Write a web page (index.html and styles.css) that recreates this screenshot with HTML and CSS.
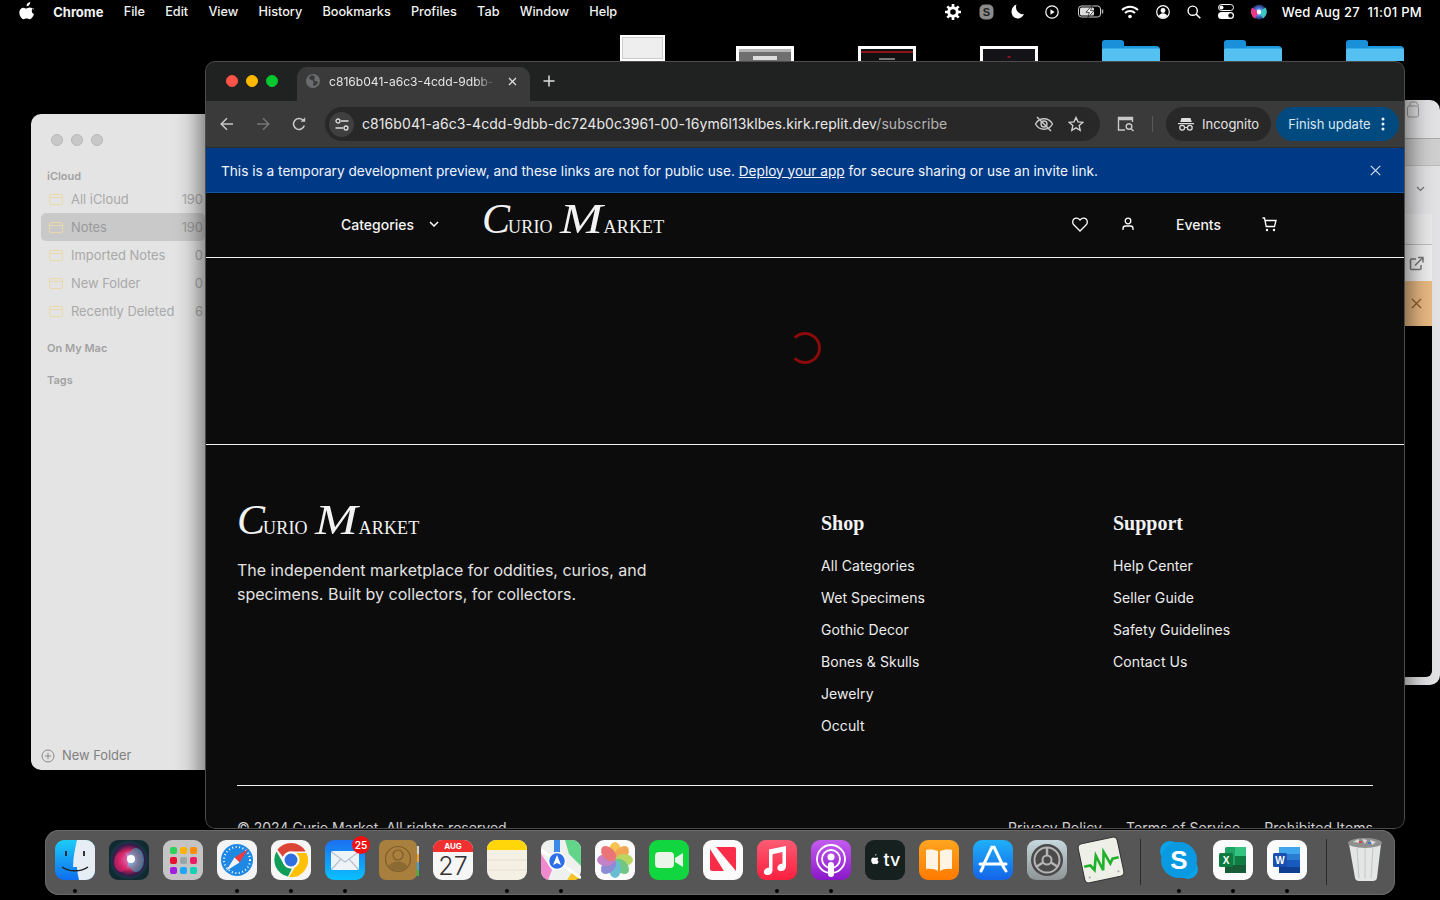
FILE: index.html
```html
<!DOCTYPE html>
<html lang="en">
<head>
  <meta charset="UTF-8">
  <meta name="viewport" content="width=device-width, initial-scale=1.0">
  <title>Curio Market - Subscribe</title>
  <link rel="stylesheet" href="styles.css">
</head>
<body>
<div class="desktop">

  <!-- menu bar -->
  <header class="menubar">
    <nav class="menu-left">
      <svg class="apple" width="16" height="18" viewBox="0 0 16 18"><path fill="#fff" d="M11.2 0c.1 1.2-.3 2.2-1 3-.7.8-1.700 1.300-2.600 1.200-.1-1.100.4-2.200 1-2.900C9.300.6 10.400.1 11.200 0zM14.500 6.100c-1 .6-1.700 1.600-1.700 2.900 0 1.500.9 2.600 2.200 3.100-.3 1-.8 1.900-1.400 2.800-.9 1.200-1.700 2.300-3 2.300s-1.600-.7-3-.7-1.900.7-3 .7c-1.200 0-2.100-1.200-3-2.500C.4 12.900-.1 10.300.8 8.200c.7-1.500 2-2.500 3.500-2.500 1.200 0 2.100.8 3.100.8.900 0 1.800-.9 3.300-.9 1.500.100 2.900.7 3.800 2.500z"/></svg>
      <span class="menu-item app-name">Chrome</span>
      <span class="menu-item">File</span>
      <span class="menu-item">Edit</span>
      <span class="menu-item">View</span>
      <span class="menu-item">History</span>
      <span class="menu-item">Bookmarks</span>
      <span class="menu-item">Profiles</span>
      <span class="menu-item">Tab</span>
      <span class="menu-item">Window</span>
      <span class="menu-item">Help</span>
    </nav>
    <div class="menu-right">
      <svg class="status-gear" width="16" height="16" viewBox="0 0 16 16"><circle cx="8" cy="8" r="4.300" fill="none" stroke="#fff" stroke-width="3"/><path stroke="#fff" stroke-width="2.600" d="M8 0v3M8 13v3M0 8h3M13 8h3M2.300 2.300l2.100 2.100M11.600 11.600l2.100 2.100M2.300 13.700l2.100-2.100M11.600 4.400l2.100-2.100"/></svg>
      <svg width="15" height="16" viewBox="0 0 15 16"><rect x=".5" y=".5" width="14" height="15" rx="5" fill="#8a8a8a"/><text x="7.500" y="12" text-anchor="middle" class="svg-s">S</text></svg>
      <svg class="status-moon" width="14" height="15" viewBox="0 0 14 15"><path fill="#fff" d="M5.500.5C3.800 5 6.500 10 13 10.300 11.700 13 9.300 14.500 7 14.500 3.200 14.500.5 11.400.5 7.800.5 4.300 2.500 1.500 5.500.5z"/></svg>
      <svg class="status-play" width="14" height="14" viewBox="0 0 14 14"><circle cx="7" cy="7" r="6.200" fill="none" stroke="#fff" stroke-width="1.200"/><path fill="#fff" d="M5.500 4.200l4 2.800-4 2.800z"/></svg>
      <svg width="26" height="13" viewBox="0 0 26 13"><rect x=".5" y="1" width="22" height="11" rx="3" fill="none" stroke="#ccc"/><rect x="2" y="2.500" width="14" height="8" rx="1.500" fill="#ddd"/><path fill="#fff" stroke="#000" stroke-width=".7" d="M14 .5L8 7.300h3.400L10 12.500l6-6.800h-3.400z"/><path stroke="#aaa" stroke-width="1.500" d="M24.500 4.500v4"/></svg>
      <svg width="18" height="14" viewBox="0 0 18 14"><path fill="none" stroke="#fff" stroke-width="2" d="M1 5c4.500-4.300 11.500-4.300 16 0M4 8c2.800-2.600 7.200-2.600 10 0"/><circle cx="9" cy="11.500" r="1.800" fill="#fff"/></svg>
      <svg width="14" height="14" viewBox="0 0 14 14"><circle cx="7" cy="7" r="6.300" fill="none" stroke="#fff" stroke-width="1.200"/><circle cx="7" cy="5.500" r="2.400" fill="#fff"/><path fill="#fff" d="M2.800 11c.8-2 2.300-2.800 4.200-2.800s3.400.8 4.200 2.800C10 12.300 8.500 13 7 13s-3-.7-4.200-2z"/></svg>
      <svg width="14" height="14" viewBox="0 0 14 14"><circle cx="5.700" cy="5.700" r="4.600" fill="none" stroke="#fff" stroke-width="1.400"/><path stroke="#fff" stroke-width="1.600" d="M9 9l4.300 4.300"/></svg>
      <svg width="16" height="15" viewBox="0 0 16 15"><rect x=".5" y=".5" width="15" height="6" rx="3" fill="none" stroke="#fff"/><circle cx="3.500" cy="3.500" r="2" fill="#fff"/><rect y="8" width="16" height="7" rx="3.500" fill="#fff"/><circle cx="12.500" cy="11.500" r="2.200" fill="#000"/></svg>
      <svg width="16" height="16" viewBox="0 0 16 16"><defs><radialGradient id="siri-menu"><stop offset="0" stop-color="#fff"/><stop offset=".5" stop-color="#4a7ee8"/><stop offset="1" stop-color="#222a55"/></radialGradient></defs><circle cx="8" cy="8" r="7.500" fill="url(#siri-menu)"/><path fill="#e83a8c" d="M8 8L1 3.500A8 8 0 0 0 4 14.500z"/><path fill="#3bc7c4" d="M8 8l6.500-4.500A8 8 0 0 1 12 14.500z"/><circle cx="8" cy="8" r="2.200" fill="#fff"/></svg>
      <span class="menu-clock">Wed Aug 27&nbsp; 11:01 PM</span>
    </div>
  </header>

  <!-- desktop icons peeking out behind the browser -->
  <div class="desk-icon shot shot-blank"></div>
  <div class="desk-icon shot shot-grey"></div>
  <div class="desk-icon shot shot-red"></div>
  <div class="desk-icon shot shot-dark"></div>
  <div class="desk-icon folder folder-1"></div>
  <div class="desk-icon folder folder-2"></div>
  <div class="desk-icon folder folder-3"></div>

  <!-- notes window -->
  <aside class="notes-window">
    <div class="lights">
      <span class="light"></span><span class="light"></span><span class="light"></span>
    </div>
    <h4 class="notes-head">iCloud</h4>
    <ul class="notes-list">
      <li class="notes-row"><span class="folder-mini"></span><span class="notes-name">All iCloud</span><span>190</span></li>
      <li class="notes-row selected"><span class="folder-mini"></span><span class="notes-name">Notes</span><span>190</span></li>
      <li class="notes-row"><span class="folder-mini"></span><span class="notes-name">Imported Notes</span><span>0</span></li>
      <li class="notes-row"><span class="folder-mini"></span><span class="notes-name">New Folder</span><span>0</span></li>
      <li class="notes-row"><span class="folder-mini"></span><span class="notes-name">Recently Deleted</span><span>6</span></li>
    </ul>
    <h4 class="notes-head on-mac">On My Mac</h4>
    <h4 class="notes-head tags">Tags</h4>
    <div class="new-folder">
      <svg width="14" height="14" viewBox="0 0 14 14"><circle cx="7" cy="7" r="6" fill="none" stroke="#888"/><path stroke="#888" d="M7 3.800v6.400M3.800 7h6.400"/></svg>
      New Folder
    </div>
  </aside>

  <!-- window on the right, mostly hidden -->
  <aside class="side-window">
    <div class="side-top">
      <svg width="16" height="18" viewBox="0 0 16 18"><rect x=".5" y="5" width="11" height="11" rx="2" fill="none" stroke="#999"/><path fill="none" stroke="#999" d="M3 5V2.500A1.500 1.500 0 0 1 4.500 1H9l3 4"/></svg>
    </div>
    <div class="side-bar"></div>
    <div class="side-sort"><svg width="9" height="6" viewBox="0 0 9 6"><path fill="none" stroke="#777" stroke-width="1.200" d="M1 1l3.500 3.500L8 1"/></svg></div>
    <div class="side-row"></div>
    <div class="side-link">
      <svg width="15" height="15" viewBox="0 0 15 15"><path fill="none" stroke="#777" stroke-width="1.500" d="M7 3H2.500A1 1 0 0 0 1.500 4v8.500a1 1 0 0 0 1 1H11a1 1 0 0 0 1-1V9M6 9.500L13.500 2M9 1.500h5v5"/></svg>
    </div>
    <div class="side-close">
      <svg width="11" height="11" viewBox="0 0 11 11"><path stroke="#8a5a2a" stroke-width="1.200" d="M1 1l9 9M10 1l-9 9"/></svg>
    </div>
    <div class="side-black"></div>
  </aside>

  <!-- browser -->
  <main class="browser">
    <div class="tabstrip">
      <div class="lights traffic">
        <span class="light red"></span><span class="light yellow"></span><span class="light green"></span>
      </div>
      <div class="tab">
        <svg width="14" height="14" viewBox="0 0 14 14"><circle cx="7" cy="7" r="7" fill="#6a6d70"/><path fill="#3a3a3a" d="M5 1.500C3 2.500 2.500 4.500 4 5.500s3 .5 3.500 2-1 2.500 0 4.500c2-.3 4-1.800 4.500-4-1-1-2.500-.5-3.500-1.500S9.500 4 8.500 2C7.500 1.300 6 1.200 5 1.500z"/></svg>
        <span class="tab-title">c816b041-a6c3-4cdd-9dbb-</span>
        <svg class="tab-close" width="9" height="9" viewBox="0 0 9 9"><path stroke="#ddd" stroke-width="1.300" d="M1 1l7 7M8 1L1 8"/></svg>
      </div>
      <svg class="tab-new" width="12" height="12" viewBox="0 0 12 12"><path stroke="#ddd" stroke-width="1.500" d="M6 .5v11M.5 6h11"/></svg>
    </div>

    <div class="toolbar">
      <svg class="tool-icon" width="14" height="14" viewBox="0 0 14 14"><path fill="none" stroke="#c8c8c8" stroke-width="1.500" d="M13 7H1.500M7 1.200L1.200 7 7 12.800"/></svg>
      <svg class="tool-icon" width="14" height="14" viewBox="0 0 14 14"><path fill="none" stroke="#757575" stroke-width="1.500" d="M1 7h11.500M7 1.200L12.800 7 7 12.800"/></svg>
      <svg class="tool-icon" width="14" height="14" viewBox="0 0 14 14"><path fill="none" stroke="#c8c8c8" stroke-width="1.500" d="M12.300 8.500A5.500 5.500 0 1 1 11 3.200"/><path fill="#c8c8c8" d="M8.500 4.800h4.700V.2z"/></svg>
      <div class="omnibox">
        <span class="site-info">
          <svg width="14" height="13" viewBox="0 0 14 13"><path fill="none" stroke="#ddd" stroke-width="1.300" d="M6 3h7.500M.5 10H8"/><circle cx="3" cy="3" r="2" fill="none" stroke="#ddd" stroke-width="1.300"/><circle cx="11" cy="10" r="2" fill="none" stroke="#ddd" stroke-width="1.300"/></svg>
        </span>
        <span class="url">c816b041-a6c3-4cdd-9dbb-dc724b0c3961-00-16ym6l13klbes.kirk.replit.dev<span class="url-path">/subscribe</span></span>
        <svg width="20" height="16" viewBox="0 0 20 16"><path fill="none" stroke="#c8c8c8" stroke-width="1.400" d="M1.500 8C3.500 4.500 6.500 2.800 10 2.800S16.500 4.500 18.500 8c-2 3.500-5 5.200-8.500 5.200S3.500 11.500 1.500 8z"/><circle cx="10" cy="8" r="3" fill="none" stroke="#c8c8c8" stroke-width="1.400"/><path stroke="#c8c8c8" stroke-width="1.500" d="M3 1l14 14"/></svg>
        <svg class="star" width="16" height="16" viewBox="0 0 16 16"><path fill="none" stroke="#d0d0d0" stroke-width="1.400" d="M8 1.500l2 4.400 4.800.5-3.600 3.200 1 4.700L8 11.900l-4.200 2.400 1-4.700L1.200 6.400 6 5.900z"/></svg>
      </div>
      <svg class="reader" width="18" height="16" viewBox="0 0 18 16"><path fill="none" stroke="#c8c8c8" stroke-width="1.400" d="M8 14H1.500V1.500h14V6"/><path stroke="#c8c8c8" stroke-width="2.500" d="M1.500 3h14"/><circle cx="12" cy="10.500" r="2.800" fill="none" stroke="#c8c8c8" stroke-width="1.400"/><path stroke="#c8c8c8" stroke-width="1.500" d="M14 12.500l2.500 2.500"/></svg>
      <span class="tool-sep"></span>
      <div class="incognito">
        <svg width="16" height="14" viewBox="0 0 16 14"><path fill="#ddd" d="M3.500 1h9l1.300 4H2.200zM0 6h16v1.300H0z"/><circle cx="4.200" cy="10.800" r="2.400" fill="none" stroke="#ddd" stroke-width="1.300"/><circle cx="11.800" cy="10.800" r="2.400" fill="none" stroke="#ddd" stroke-width="1.300"/><path stroke="#ddd" stroke-width="1.200" d="M6.600 10.500h2.800"/></svg>
        Incognito
      </div>
      <div class="finish-update">
        Finish update
        <svg width="4" height="14" viewBox="0 0 4 14"><circle cx="2" cy="2" r="1.500" fill="#e8f0fa"/><circle cx="2" cy="7" r="1.500" fill="#e8f0fa"/><circle cx="2" cy="12" r="1.500" fill="#e8f0fa"/></svg>
      </div>
    </div>

    <div class="dev-banner">
      <p>This is a temporary development preview, and these links are not for public use. <a href="#">Deploy your app</a> for secure sharing or use an invite link.</p>
      <svg width="11" height="11" viewBox="0 0 11 11"><path stroke="#d5def0" stroke-width="1.200" d="M.8.8l9.400 9.400M10.200.8L.8 10.200"/></svg>
    </div>

    <div class="page">
      <div class="site-nav">
        <div class="nav-left">
          <button class="categories">
            Categories
            <svg width="10" height="6" viewBox="0 0 10 6"><path fill="none" stroke="#fff" stroke-width="1.500" d="M1 1l4 4 4-4"/></svg>
          </button>
          <a class="logo" href="#"><span class="logo-c">C</span>URIO <span class="logo-m">M</span>ARKET</a>
        </div>
        <div class="nav-right">
          <svg width="16" height="15" viewBox="0 0 16 15"><path fill="none" stroke="#fff" stroke-width="1.300" d="M8 14L2 8C.2 6.200.3 3.500 1.900 2c1.600-1.400 4.300-1.300 6.100 1 1.800-2.300 4.500-2.400 6.100-1 1.600 1.500 1.700 4.200-.1 6z"/></svg>
          <svg class="icon-user" width="12" height="14" viewBox="0 0 12 14"><circle cx="6" cy="4" r="2.800" fill="none" stroke="#fff" stroke-width="1.300"/><path fill="none" stroke="#fff" stroke-width="1.300" d="M1 13v-1.500C1 10 2.300 9 3.500 9h5c1.200 0 2.500 1 2.500 2.500V13"/></svg>
          <span class="nav-events">Events</span>
          <svg class="icon-cart" width="15" height="15" viewBox="0 0 15 15"><path fill="none" stroke="#fff" stroke-width="1.300" d="M.5 1h2l1.700 8.500h8.300L14 3.500H3.200"/><circle cx="5" cy="13" r="1.200" fill="#fff"/><circle cx="12" cy="13" r="1.200" fill="#fff"/></svg>
        </div>
      </div>

      <div class="loading">
        <div class="spinner"></div>
      </div>

      <footer class="site-footer">
        <div class="footer-grid">
          <div class="footer-brand">
            <a class="logo" href="#"><span class="logo-c">C</span>URIO <span class="logo-m">M</span>ARKET</a>
            <p>The independent marketplace for oddities, curios, and specimens. Built by collectors, for collectors.</p>
          </div>
          <div class="footer-col">
            <h3>Shop</h3>
            <a href="#">All Categories</a>
            <a href="#">Wet Specimens</a>
            <a href="#">Gothic Decor</a>
            <a href="#">Bones &amp; Skulls</a>
            <a href="#">Jewelry</a>
            <a href="#">Occult</a>
          </div>
          <div class="footer-col">
            <h3>Support</h3>
            <a href="#">Help Center</a>
            <a href="#">Seller Guide</a>
            <a href="#">Safety Guidelines</a>
            <a href="#">Contact Us</a>
          </div>
        </div>
        <div class="footer-bottom">
          <span>© 2024 Curio Market. All rights reserved.</span>
          <div class="legal">
            <a href="#">Privacy Policy</a>
            <a href="#">Terms of Service</a>
            <a href="#">Prohibited Items</a>
          </div>
        </div>
      </footer>
    </div>
  </main>

  <!-- dock -->
  <footer class="dock">
    <div class="dock-item running">
      <svg viewBox="0 0 40 40"><defs><linearGradient id="finder-a" x1="0" y1="0" x2="0" y2="1"><stop offset="0" stop-color="#1ccbf7"/><stop offset="1" stop-color="#0f6ff0"/></linearGradient></defs><rect width="40" height="40" rx="9" fill="url(#finder-a)"/><path fill="#e6edf5" d="M22 0h9a9 9 0 0 1 9 9v22a9 9 0 0 1-9 9h-7c-1-5-2-9-2-13h-4c0-9 2-18 4-27z"/><path stroke="#222" stroke-width="1.800" d="M11 11v5M29 11v5"/><path fill="none" stroke="#222" stroke-width="1.500" d="M7 27c7 5 19 5 26 0"/></svg>
    </div>
    <div class="dock-item">
      <svg viewBox="0 0 40 40"><defs><radialGradient id="siri-a"><stop offset="0" stop-color="#fff"/><stop offset=".2" stop-color="#c9a0e8"/><stop offset=".5" stop-color="#d0245f"/><stop offset=".8" stop-color="#3a1a4a"/><stop offset="1" stop-color="#0c3a44"/></radialGradient></defs><rect width="40" height="40" rx="9" fill="#102a30"/><circle cx="20" cy="20" r="19" fill="url(#siri-a)"/><ellipse cx="27" cy="20" rx="8" ry="12" fill="#3fb6c6" opacity=".55"/><ellipse cx="12" cy="22" rx="7" ry="10" fill="#e0246a" opacity=".6"/><circle cx="22" cy="19" r="4" fill="#fff"/></svg>
    </div>
    <div class="dock-item">
      <svg viewBox="0 0 40 40"><rect width="40" height="40" rx="9" fill="#c4c4c4"/><rect x="7" y="7" width="7" height="7" rx="2" fill="#30d158"/><rect x="17" y="7" width="7" height="7" rx="2" fill="#ffb300"/><rect x="27" y="7" width="7" height="7" rx="2" fill="#fb8c00"/><rect x="7" y="17" width="7" height="7" rx="2" fill="#e8112d"/><rect x="17" y="17" width="7" height="7" rx="2" fill="#9aa5a8"/><rect x="27" y="17" width="7" height="7" rx="2" fill="#ec1c64"/><rect x="7" y="27" width="7" height="7" rx="2" fill="#a11ee0"/><rect x="17" y="27" width="7" height="7" rx="2" fill="#1ea7fd"/><rect x="27" y="27" width="7" height="7" rx="2" fill="#12d1b4"/></svg>
    </div>
    <div class="dock-item running">
      <svg viewBox="0 0 40 40"><rect width="40" height="40" rx="9" fill="#f4f4f4"/><circle cx="20" cy="20" r="16" fill="#1e88e5"/><circle cx="20" cy="20" r="13" fill="none" stroke="#fff" stroke-width="2" stroke-dasharray="1 2.500"/><path fill="#ef3b3b" d="M31 9L17.500 17.500l5 5z"/><path fill="#f5f5f5" d="M9 31l8.500-13.500 5 5z"/></svg>
    </div>
    <div class="dock-item running">
      <svg viewBox="0 0 40 40"><rect width="40" height="40" rx="9" fill="#f6f6f6"/><path fill="#db4437" d="M20 3a17 17 0 0 1 14.700 8.500H20a8.500 8.500 0 0 0-8 5.500L6.400 9.800A17 17 0 0 1 20 3z"/><path fill="#0f9d58" d="M5.500 11.500L13 24.500a8.500 8.500 0 0 0 8 4l-4 8A17 17 0 0 1 5.500 11.500z"/><path fill="#ffc107" d="M35.500 13a17 17 0 0 1-17.500 24l7.500-12.500a8.500 8.500 0 0 0 0-11.500z"/><circle cx="20" cy="20" r="8.500" fill="#fff"/><circle cx="20" cy="20" r="6.500" fill="#2f6fe0"/></svg>
    </div>
    <div class="dock-item running">
      <svg viewBox="0 0 40 40"><defs><linearGradient id="mail-a" x1="0" y1="0" x2="0" y2="1"><stop offset="0" stop-color="#1c6ff0"/><stop offset="1" stop-color="#0ac0ff"/></linearGradient></defs><rect width="40" height="40" rx="9" fill="url(#mail-a)"/><rect x="6" y="11" width="28" height="19" rx="2" fill="#eef3f8"/><path fill="none" stroke="#b5c2ce" stroke-width="1.200" d="M6.500 12L20 22l13.500-10M6.500 29.500L16 19M33.500 29.500L24 19"/></svg>
      <span class="badge">25</span>
    </div>
    <div class="dock-item">
      <svg viewBox="0 0 40 40"><rect x="36" y="6" width="4" height="8" fill="#d3d3d3"/><rect x="36" y="14" width="4" height="8" fill="#f1a533"/><rect x="36" y="22" width="4" height="8" fill="#3aa6dd"/><rect x="36" y="30" width="4" height="6" fill="#3ab54a"/><rect width="38" height="40" rx="7" fill="#a97f3d"/><circle cx="19" cy="19" r="12.500" fill="none" stroke="#7e5d2a" stroke-width="1.200"/><circle cx="19" cy="15" r="5" fill="none" stroke="#7e5d2a" stroke-width="1.200"/><path fill="#8c6a33" d="M9.500 27c2.500-5 6-5.500 9.500-5.500s7 .5 9.500 5.500c-5 5-14 5-19 0z"/></svg>
    </div>
    <div class="dock-item">
      <svg viewBox="0 0 40 40"><rect width="40" height="40" rx="9" fill="#f6f6f6"/><path fill="#f0312f" d="M0 12V9a9 9 0 0 1 9-9h22a9 9 0 0 1 9 9v3z"/><text x="20" y="9" text-anchor="middle" class="svg-month">AUG</text><text x="20" y="35" text-anchor="middle" class="svg-day">27</text></svg>
    </div>
    <div class="dock-item running">
      <svg viewBox="0 0 40 40"><rect width="40" height="40" rx="9" fill="#f4f0e4"/><path fill="#ffd60a" d="M0 10V9a9 9 0 0 1 9-9h22a9 9 0 0 1 9 9v1z"/><path stroke="#e4dfd0" d="M0 20h40M0 30h40"/></svg>
    </div>
    <div class="dock-item running">
      <svg viewBox="0 0 40 40"><rect width="40" height="40" rx="9" fill="#eef1ee"/><path fill="#63d58a" d="M24 0h7a9 9 0 0 1 9 9v17L28 14z"/><path fill="#f189cf" d="M0 14l11 16-4 10a9 9 0 0 1-7-9z"/><path fill="#f7c327" d="M26 40l6-9 8 5a9 9 0 0 1-9 4z"/><path fill="#3a88e8" d="M13 0h6v14h-6z"/><path stroke="#fff" stroke-width="3" d="M0 10l40 28"/><circle cx="16" cy="21" r="8.500" fill="#2c6fe8" stroke="#fff" stroke-width="1.500"/><path fill="#fff" d="M16 15l4 10-4-2-4 2z"/></svg>
    </div>
    <div class="dock-item">
      <svg viewBox="0 0 40 40"><rect width="40" height="40" rx="9" fill="#fbfbfb"/><g opacity=".75"><ellipse cx="20" cy="11" rx="6" ry="9" fill="#f5b017"/><ellipse cx="20" cy="11" rx="6" ry="9" fill="#f08a1d" transform="rotate(45 20 20)"/><ellipse cx="20" cy="11" rx="6" ry="9" fill="#a6c92f" transform="rotate(90 20 20)"/><ellipse cx="20" cy="11" rx="6" ry="9" fill="#45b55e" transform="rotate(135 20 20)"/><ellipse cx="20" cy="11" rx="6" ry="9" fill="#38a9c9" transform="rotate(180 20 20)"/><ellipse cx="20" cy="11" rx="6" ry="9" fill="#6a66c9" transform="rotate(225 20 20)"/><ellipse cx="20" cy="11" rx="6" ry="9" fill="#b15ab8" transform="rotate(270 20 20)"/><ellipse cx="20" cy="11" rx="6" ry="9" fill="#e5484d" transform="rotate(315 20 20)"/></g></svg>
    </div>
    <div class="dock-item">
      <svg viewBox="0 0 40 40"><rect width="40" height="40" rx="9" fill="#12d63f"/><rect x="6" y="12" width="19" height="16" rx="4" fill="#e8f5e8"/><path fill="#e8f5e8" d="M26 18l8-5v14l-8-5z"/></svg>
    </div>
    <div class="dock-item">
      <svg viewBox="0 0 40 40"><rect width="40" height="40" rx="9" fill="#fbfbfb"/><path fill="#fa2d48" d="M7 9l14 22H9a2 2 0 0 1-2-2zM13 7h18a2 2 0 0 1 2 2v22z"/></svg>
    </div>
    <div class="dock-item running">
      <svg viewBox="0 0 40 40"><defs><linearGradient id="music-a" x1="0" y1="0" x2="0" y2="1"><stop offset="0" stop-color="#fb5c74"/><stop offset="1" stop-color="#fa1f3e"/></linearGradient></defs><rect width="40" height="40" rx="9" fill="url(#music-a)"/><path fill="#fff" d="M29 6v20c0 3-2 5-5 5s-4-2-3.500-4 2-3 5-3.500V12l-10 2.200V30c0 3-2 5-5 5s-4-2-3.500-4 2-3 5-3.500V9.500z"/></svg>
    </div>
    <div class="dock-item running">
      <svg viewBox="0 0 40 40"><defs><linearGradient id="pod-a" x1="0" y1="0" x2="0" y2="1"><stop offset="0" stop-color="#c45cf0"/><stop offset="1" stop-color="#8a18c8"/></linearGradient></defs><rect width="40" height="40" rx="9" fill="url(#pod-a)"/><circle cx="20" cy="19" r="14" fill="none" stroke="#fff" stroke-width="1.800"/><circle cx="20" cy="19" r="9" fill="none" stroke="#fff" stroke-width="1.800"/><circle cx="20" cy="17" r="3.500" fill="#fff"/><rect x="17" y="22" width="6" height="15" rx="3" fill="#fff"/></svg>
    </div>
    <div class="dock-item">
      <svg viewBox="0 0 40 40"><rect width="40" height="40" rx="9" fill="#16211f"/><text x="27" y="26" text-anchor="middle" class="svg-tv">tv</text><path fill="#fff" d="M11.500 14c0 .9-.6 1.600-1.400 1.600 0-.9.600-1.500 1.400-1.600zM13.500 18c-.7.400-1 1-1 1.700 0 .9.500 1.500 1.200 1.800-.4 1.200-1.300 2.700-2.200 2.700-.6 0-.8-.4-1.500-.4s-1 .4-1.500.4c-1 0-2.300-2-2.300-3.900 0-1.800 1.100-2.800 2.200-2.800.7 0 1.200.4 1.600.4s1-.5 1.800-.5c.8 0 1.400.3 1.700.6z"/></svg>
    </div>
    <div class="dock-item">
      <svg viewBox="0 0 40 40"><defs><linearGradient id="books-a" x1="0" y1="0" x2="0" y2="1"><stop offset="0" stop-color="#ffa51f"/><stop offset="1" stop-color="#ff7a00"/></linearGradient></defs><rect width="40" height="40" rx="9" fill="url(#books-a)"/><path fill="#fff3e4" d="M19 11v20c-3-2-7-2.500-12-2V10c5-1 9 0 12 1zM21 11v20c3-2 7-2.500 12-2V10c-5-1-9 0-12 1z"/></svg>
    </div>
    <div class="dock-item">
      <svg viewBox="0 0 40 40"><defs><linearGradient id="store-a" x1="0" y1="0" x2="0" y2="1"><stop offset="0" stop-color="#1fb0f8"/><stop offset="1" stop-color="#1464e8"/></linearGradient></defs><rect width="40" height="40" rx="9" fill="url(#store-a)"/><path fill="none" stroke="#fff" stroke-width="3" stroke-linecap="round" d="M21 7l10 21M19 7L10 26M7 24h26M8 31l2-4M31 28l2 3"/></svg>
    </div>
    <div class="dock-item">
      <svg viewBox="0 0 40 40"><defs><linearGradient id="pref-a" x1="0" y1="0" x2="0" y2="1"><stop offset="0" stop-color="#c6d8de"/><stop offset="1" stop-color="#8f9496"/></linearGradient></defs><rect width="40" height="40" rx="9" fill="url(#pref-a)"/><circle cx="20" cy="20" r="16" fill="#4a4a4a"/><circle cx="20" cy="20" r="12.500" fill="none" stroke="#b5b5b5" stroke-width="2"/><circle cx="20" cy="20" r="4.500" fill="none" stroke="#b5b5b5" stroke-width="2"/><path stroke="#b5b5b5" stroke-width="2.500" d="M20 15.500V7.500M16 22.500L9 27M24 22.500L31 27"/></svg>
    </div>
    <div class="dock-item tilted">
      <svg viewBox="0 0 40 40"><rect x="1" y="1" width="38" height="38" rx="4" fill="#eef0e8" stroke="#333"/><path fill="none" stroke="#1fb12a" stroke-width="2.500" d="M3 23h6l3 5 4-13 4 15 4-17 4 12 3-4h6"/><circle cx="6" cy="34" r="1" fill="#aaa"/><circle cx="34" cy="34" r="1" fill="#aaa"/></svg>
    </div>
    <span class="dock-sep"></span>
    <div class="dock-item running">
      <svg viewBox="0 0 40 40"><circle cx="11" cy="11" r="10" fill="#0aa3e8"/><circle cx="29" cy="29" r="10" fill="#0aa3e8"/><circle cx="20" cy="20" r="18" fill="#0a9ae2"/><text x="20" y="29" text-anchor="middle" class="svg-skype">S</text></svg>
    </div>
    <div class="dock-item running">
      <svg viewBox="0 0 40 40"><rect width="40" height="40" rx="9" fill="#fbfbfb"/><rect x="12" y="7" width="21" height="26" rx="1.500" fill="#21a366"/><rect x="22" y="7" width="11" height="9" fill="#33c481"/><rect x="22" y="16" width="11" height="9" fill="#107c41"/><rect x="12" y="25" width="21" height="8" fill="#185c37"/><rect x="6" y="13" width="14" height="14" rx="1.500" fill="#0f7b41"/><text x="13" y="24" text-anchor="middle" class="svg-office">X</text></svg>
    </div>
    <div class="dock-item running">
      <svg viewBox="0 0 40 40"><rect width="40" height="40" rx="9" fill="#fbfbfb"/><rect x="12" y="7" width="21" height="26" rx="1.500" fill="#2b7cd3"/><rect x="12" y="7" width="21" height="7" fill="#41a5ee"/><rect x="12" y="20" width="21" height="7" fill="#185abd"/><rect x="12" y="27" width="21" height="6" fill="#103f91"/><rect x="6" y="13" width="14" height="14" rx="1.500" fill="#1a4fb0"/><text x="13" y="24" text-anchor="middle" class="svg-office">W</text></svg>
    </div>
    <span class="dock-sep"></span>
    <div class="dock-item">
      <svg class="trash" viewBox="0 0 40 46"><path fill="#e4e6e6" d="M4 8h32l-4 34c-.3 2-2 3-4 3H14c-2 0-3.700-1-4-3z"/><path stroke="#c4c6c6" d="M12 12l2 30M20 12v30M28 12l-2 30"/><ellipse cx="20" cy="7" rx="17" ry="5" fill="#8f8f8f"/><path fill="#d9d9d9" d="M8 6l5-3 3 4zM17 3l5 1-2 4zM25 4l6 2-4 3z"/><path fill="#c44" d="M14 5h3v2h-3z"/><path fill="#47b" d="M23 6h3v2h-3z"/></svg>
    </div>
  </footer>
</div>
</body>
</html>
```

FILE: styles.css
```css
* {
  box-sizing: border-box;
}

html, body {
  margin: 0;
  height: 100%;
  background: #000;
}

a {
  color: inherit;
  text-decoration: none;
}

p, h3, h4, ul {
  margin: 0;
  padding: 0;
}

ul {
  list-style: none;
}

.desktop {
  position: relative;
  width: 1440px;
  height: 900px;
  overflow: hidden;
  background: #000;
  font-family: Inter, "Liberation Sans", sans-serif;
  color: #fff;
}

/* menu bar */
.menubar {
  display: flex;
  justify-content: space-between;
  align-items: center;
  height: 23px;
  padding: 0 18px 0 19px;
  font-size: 13px;
  font-weight: 500;
}

.menu-left {
  display: flex;
  align-items: center;
  gap: 20.2px;
}

.apple {
  margin-right: -2px;
  margin-top: -2px;
}

.menu-item {
  font-size: 12.7px;
  white-space: nowrap;
  color: #f2f2f2;
}

.menu-item.app-name {
  font-size: 13px;
  font-weight: 700;
}

.menu-right {
  display: flex;
  align-items: center;
  gap: 17px;
}

.status-gear {
  margin-right: 1px;
}

.status-moon {
  margin-right: 3px;
}

.status-play {
  margin-right: 2px;
}

.menu-clock {
  margin-left: -2px;
  letter-spacing: 0.28px;
  white-space: nowrap;
}

.svg-s {
  font: 700 11px "Liberation Sans", sans-serif;
  fill: #222;
}

/* desktop icons */
.desk-icon {
  position: absolute;
  z-index: 2;
}

.shot {
  top: 46px;
  width: 58px;
  height: 15px;
  border: 3px solid #fff;
  border-bottom: 0;
}

.shot::after {
  content: "";
  position: absolute;
  left: 50%;
  bottom: 1px;
  transform: translateX(-50%);
}

.shot-blank {
  left: 620px;
  top: 35px;
  width: 45px;
  height: 26px;
  border: 2px solid #fff;
  background: #eee;
  outline: 1px solid #ccc;
  outline-offset: -3px;
}

.shot-grey {
  left: 736px;
  background: linear-gradient(#b5b5b5 0 3px, #6f6f6f 3px);
}

.shot-grey::after {
  width: 24px;
  height: 4px;
  background: #ddd;
}

.shot-red {
  left: 858px;
  background: linear-gradient(#111 0 2px, #8c1418 2px 4px, #111 4px);
}

.shot-red::after {
  width: 16px;
  height: 2px;
  background: #777;
}

.shot-dark {
  left: 980px;
  background: #141418;
}

.shot-dark::after {
  width: 3px;
  height: 2px;
  bottom: 3px;
  background: #8c1418;
}

.folder {
  top: 46px;
  width: 58px;
  height: 15px;
  border-radius: 4px 4px 0 0;
  background: linear-gradient(#1b9ae0 0 2px, #55c0f2 3px);
}

.folder::before {
  content: "";
  position: absolute;
  left: 0;
  top: -6px;
  width: 22px;
  height: 8px;
  border-radius: 3px 3px 0 0;
  background: #1b90da;
}

.folder-1 { left: 1102px; }
.folder-2 { left: 1224px; }
.folder-3 { left: 1346px; }

/* notes window */
.notes-window {
  position: absolute;
  left: 31px;
  top: 114px;
  width: 184px;
  height: 656px;
  padding: 0 10px;
  border-radius: 10px 0 0 10px;
  background: #e4e4e4;
  font-size: 12.9px;
  color: #a9a9a9;
}

.lights {
  display: flex;
  gap: 8px;
}

.notes-window .lights {
  padding: 20px 0 0 10px;
}

.light {
  width: 12px;
  height: 12px;
  border-radius: 50%;
  background: #c8c8c8;
  border: 1px solid #b8b8b8;
}

.notes-head {
  padding-left: 6px;
  font-size: 11px;
  font-weight: 600;
  color: #a2a2a2;
}

.notes-window .lights + .notes-head {
  margin-top: 23px;
}

.notes-list {
  margin-top: 2px;
}

.notes-row {
  display: flex;
  align-items: center;
  height: 28px;
  padding: 0 2px 0 8px;
  border-radius: 5px;
}

.notes-row.selected {
  background: #c9c9c9;
  color: #9a9a9a;
}

.notes-name {
  flex: 1;
  white-space: nowrap;
}

.folder-mini {
  position: relative;
  width: 14px;
  height: 11px;
  margin-right: 8px;
  border: 1px solid #ecd9a8;
  border-radius: 2px;
}

.folder-mini::before {
  content: "";
  position: absolute;
  left: 0;
  right: 0;
  top: 2px;
  height: 1px;
  background: #ecd9a8;
}

.on-mac {
  margin-top: 16px;
}

.tags {
  margin-top: 18px;
}

.new-folder {
  position: absolute;
  left: 10px;
  bottom: 7px;
  display: flex;
  align-items: center;
  gap: 7px;
  color: #808080;
}

/* side window */
.side-window {
  position: absolute;
  left: 1395px;
  top: 100px;
  width: 45px;
  height: 585px;
  padding-left: 10px;
  border-radius: 0 10px 10px 0;
  background: #e2e2e4;
}

.side-window svg {
  display: block;
}

.side-top {
  height: 38px;
  padding: 1px 0 0 2px;
}

.side-bar {
  height: 28px;
  background: #cfcfcf;
  border-top: 1px solid #aaa;
  border-bottom: 1px solid #bbb;
}

.side-sort {
  height: 48px;
  padding: 20px 0 0 11px;
}

.side-row {
  width: 27px;
  height: 31px;
  background: #e9e9e9;
  border-bottom: 1px solid #bdbdbd;
}

.side-link {
  width: 27px;
  height: 36px;
  padding: 11px 0 0 4px;
  background: #ededed;
}

.side-close {
  width: 27px;
  height: 45px;
  padding: 17px 0 0 6px;
  background: #e8b982;
}

.side-black {
  width: 27px;
  height: 351px;
  background: #000;
  border-radius: 0 0 6px 0;
}

/* browser */
.browser {
  position: absolute;
  left: 205px;
  top: 61px;
  z-index: 1;
  display: flex;
  flex-direction: column;
  width: 1200px;
  height: 768px;
  overflow: hidden;
  border-radius: 10px;
  background: #0c0c0c;
  box-shadow: 0 0 24px 4px rgba(0, 0, 0, 0.55);
}

.browser::after {
  content: "";
  position: absolute;
  inset: 0;
  border: 1px solid #4c4c4c;
  border-radius: 10px;
  pointer-events: none;
}

.tabstrip {
  display: flex;
  align-items: flex-end;
  flex: none;
  height: 40px;
  background: #202222;
}

.traffic {
  align-self: center;
  padding: 0 19px 0 21px;
}

.red { background: #ff5249; border-color: #ff5249; }
.yellow { background: #ffb900; border-color: #ffb900; }
.green { background: #06c72e; border-color: #06c72e; }

.tab {
  display: flex;
  align-items: center;
  flex: none;
  width: 233px;
  height: 34px;
  padding: 0 13px 6px 9px;
  border-radius: 10px 10px 0 0;
  background: #3a3a3a;
  font-size: 12.1px;
  color: #e4e4e4;
}

.tab-title {
  flex: 1;
  margin-left: 9px;
  overflow: hidden;
  white-space: nowrap;
  -webkit-mask-image: linear-gradient(to right, #000 88%, transparent 100%);
  mask-image: linear-gradient(to right, #000 88%, transparent 100%);
}

.tab-close {
  margin-left: 13px;
}

.tab-new {
  align-self: center;
  margin: 0 0 0 13px;
}

.toolbar {
  display: flex;
  align-items: center;
  flex: none;
  gap: 22px;
  height: 47px;
  padding: 0 6px 0 15px;
  background: #3a3a3a;
  border-bottom: 1px solid #2b2b2b;
}

.tool-icon {
  flex: none;
}

.omnibox {
  display: flex;
  align-items: center;
  flex: none;
  width: 775px;
  height: 34px;
  margin-left: -3px;
  padding: 0 16px 0 4px;
  border-radius: 17px;
  background: #282828;
  font-size: 14px;
  color: #e8e8e8;
}

.site-info {
  display: flex;
  align-items: center;
  justify-content: center;
  flex: none;
  width: 25px;
  height: 25px;
  border-radius: 50%;
  background: #3f3f3f;
}

.url {
  flex: 1;
  margin: -1px 0 0 8px;
  white-space: nowrap;
  letter-spacing: 0.075px;
}

.url-path {
  color: #b4b4b4;
}

.star {
  margin-left: 14px;
}

.reader {
  flex: none;
  margin-left: -5px;
}

.tool-sep {
  flex: none;
  width: 1px;
  height: 16px;
  margin-left: -5px;
  background: #5a5a5a;
}

.incognito {
  display: flex;
  align-items: center;
  flex: none;
  gap: 8px;
  height: 34px;
  margin-left: -9px;
  padding: 0 12px 0 12px;
  border-radius: 17px;
  background: #282828;
  font-size: 13px;
  color: #e4e4e4;
}

.finish-update {
  display: flex;
  align-items: center;
  flex: none;
  gap: 10px;
  height: 34px;
  margin-left: -17px;
  padding: 0 14px 0 12px;
  border-radius: 17px;
  background: #004a80;
  font-size: 13px;
  color: #d8e8f5;
}

.dev-banner {
  display: flex;
  align-items: center;
  justify-content: space-between;
  flex: none;
  height: 45px;
  padding: 1px 24px 0 16px;
  background: #003a87;
  border-bottom: 1px solid #1555a5;
  font-size: 13.65px;
  color: #f2f5fa;
}

.dev-banner a {
  text-decoration: underline;
}

/* page inside the browser */
.site-nav {
  display: flex;
  align-items: center;
  justify-content: space-between;
  height: 65px;
  padding: 0 128px 2px 136px;
  border-bottom: 1px solid #f2f2f2;
}

.nav-left {
  display: flex;
  align-items: center;
}

.categories {
  display: flex;
  align-items: center;
  gap: 15px;
  width: 141px;
  padding: 0;
  border: 0;
  background: none;
  font: 500 14px Inter, "Liberation Sans", sans-serif;
  color: #f5f5f5;
}

.logo {
  display: block;
  height: 28px;
  font: 18px/28px "Liberation Serif", serif;
  letter-spacing: 0.2px;
  white-space: nowrap;
  color: #f2f2f2;
}

.nav-left .logo {
  margin-bottom: 10px;
}

.logo-c, .logo-m {
  font-size: 42px;
  font-style: italic;
  font-weight: 400;
  letter-spacing: 0;
  line-height: 28px;
}

.logo-c {
  margin-right: -2px;
}

.logo-m {
  display: inline-block;
  width: 44px;
  margin-left: 2px;
  transform: scaleX(1.22);
  transform-origin: left;
}

.nav-right {
  display: flex;
  align-items: center;
  font-size: 14px;
  font-weight: 500;
  color: #f2f2f2;
}

.icon-user {
  margin-left: 34px;
}

.nav-events {
  margin-left: 42px;
}

.icon-cart {
  margin-left: 41px;
}

.loading {
  height: 187px;
  padding-top: 74px;
  border-bottom: 1px solid #f2f2f2;
}

.spinner {
  width: 32px;
  height: 32px;
  margin: 0 auto;
  border: 3px solid #8b0a0a;
  border-left-color: transparent;
  border-radius: 50%;
}

.site-footer {
  padding: 64px 32px 0;
}

.footer-grid {
  display: grid;
  grid-template-columns: repeat(4, 1fr);
  gap: 32px;
  padding-bottom: 49px;
  border-bottom: 1px solid #f2f2f2;
}

.footer-brand {
  grid-column: span 2;
}

.footer-brand .logo {
  margin-top: -3px;
}

.footer-brand p {
  max-width: 448px;
  margin-top: 24px;
  font-size: 16px;
  line-height: 24px;
  color: #e2e2e2;
}

.footer-col {
  display: flex;
  flex-direction: column;
  gap: 12px;
  font-size: 14px;
  line-height: 20px;
  letter-spacing: 0.08px;
  color: #eee;
}

.footer-col h3 {
  margin-bottom: 7px;
  font: 700 20px/28px "Liberation Serif", serif;
  letter-spacing: 0;
  color: #f2f2f2;
}

.footer-bottom {
  display: flex;
  justify-content: space-between;
  padding-top: 32px;
  font-size: 14px;
  line-height: 20px;
  color: #d0d0d0;
}

.legal {
  display: flex;
  gap: 24px;
  letter-spacing: 0.09px;
}

/* dock */
.dock {
  position: absolute;
  left: 45px;
  top: 830px;
  z-index: 3;
  display: flex;
  gap: 14px;
  width: 1350px;
  height: 65px;
  padding: 10px 0 0 10px;
  border-radius: 14px;
  background: #565656;
  box-shadow: inset 0 0 0 1px #6a6a6a;
}

.dock-item {
  position: relative;
  flex: none;
  width: 40px;
  height: 40px;
}

.dock-item svg {
  display: block;
  width: 40px;
  height: 40px;
}

.dock-item.running::after {
  content: "";
  position: absolute;
  left: 18px;
  top: 49px;
  width: 4px;
  height: 4px;
  border-radius: 50%;
  background: #000;
}

.tilted {
  transform: rotate(-12deg) scale(1.05);
}

.dock-sep {
  flex: none;
  width: 1px;
  height: 46px;
  margin: -1px 4px 0 5px;
  background: #2a2a2a;
}

.badge {
  position: absolute;
  right: -5px;
  top: -4px;
  width: 18px;
  height: 18px;
  border-radius: 50%;
  background: #f01010;
  font-size: 10px;
  font-weight: 600;
  line-height: 18px;
  text-align: center;
}

.svg-month {
  font: 700 8px Inter, sans-serif;
  fill: #fff;
}

.svg-day {
  font: 300 25px Inter, sans-serif;
  fill: #333;
}

.svg-tv {
  font: 500 18px Inter, sans-serif;
  fill: #fff;
}

.svg-skype {
  font: 700 26px "Liberation Sans", sans-serif;
  fill: #fff;
}

.svg-office {
  font: 700 10px "Liberation Sans", sans-serif;
  fill: #fff;
}

.dock-item .trash {
  height: 46px;
  margin-top: -4px;
}
```
